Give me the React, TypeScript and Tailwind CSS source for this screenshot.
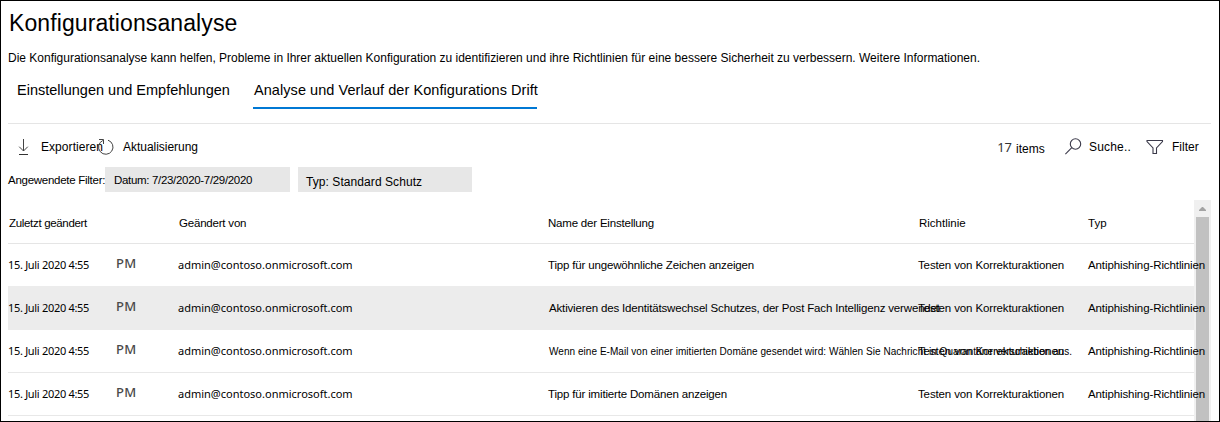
import type { ReactNode } from "react";

function DownloadIcon() {
  return (
    <svg width="12" height="18" viewBox="0 0 12 18" fill="none" strokeWidth="1">
      <path d="M5.500 1v12M1.200 8.700l4.300 4.300 4.300-4.300" stroke="#444" />
      <path d="M1 16.500h9" stroke="#333" />
    </svg>
  );
}

function RefreshIcon() {
  return (
    <svg width="18" height="18" viewBox="0 0 18 18" fill="none" stroke="#444" strokeWidth="1">
      <path d="M11 2.200a7.200 7.200 0 1 1-5.200.3" />
      <path d="M2 1.500h4.500v4.500" />
    </svg>
  );
}

function SearchIcon() {
  return (
    <svg width="18" height="18" viewBox="0 0 18 18" fill="none" stroke="#3b3a4a" strokeWidth="1.1">
      <circle cx="10.500" cy="6" r="5.200" />
      <path d="M6.800 9.700L0.400 16.100" />
    </svg>
  );
}

function FilterIcon() {
  return (
    <svg width="18" height="16" viewBox="0 0 18 16" fill="none" stroke="#3b3a4a" strokeWidth="1.1">
      <path d="M1 1.500h15.500v1l-6 6.500v5.500h-3.500v-5.500l-6-6.500z" />
    </svg>
  );
}

interface Row {
  setting: string;
  settingClass: string;
  rowClass: string;
}

const rows: Row[] = [
  {
    setting: "Tipp für ungewöhnliche Zeichen anzeigen",
    settingClass: "tracking-[-0.166px]",
    rowClass: "h-[43px]",
  },
  {
    setting: "Aktivieren des Identitätswechsel Schutzes, der Post Fach Intelligenz verwendet",
    settingClass: "pl-px tracking-[-0.16px]",
    rowClass: "-mt-px h-[44px] bg-[#ececec] pt-px",
  },
  {
    setting: "Wenn eine E-Mail von einer imitierten Domäne gesendet wird: Wählen Sie Nachricht in Quarantäne verschieben aus.",
    settingClass: "pl-px text-[10px] tracking-[0.047px]",
    rowClass: "h-[43px] border-b border-[#e8e8e8]",
  },
  {
    setting: "Tipp für imitierte Domänen anzeigen",
    settingClass: "tracking-[-0.17px]",
    rowClass: "h-[43px] border-b border-[#e8e8e8]",
  },
];

const columns = "grid grid-cols-[108px_62px_370px_370px_170px_106px] whitespace-nowrap";

function Chip({ className, children }: { className: string; children: ReactNode }) {
  return <div className={`h-[25px] bg-[#e7e7e7] ${className}`}>{children}</div>;
}

export default function App() {
  return (
    <div className="flex h-[422px] w-[1220px] flex-col overflow-hidden border border-black bg-white pl-[7px] pr-2 font-['Liberation_Sans',Arial,sans-serif] text-black">
      <h1 className="mt-2 h-7 pl-px text-[23px] leading-7 tracking-[0.1px]">Konfigurationsanalyse</h1>
      <p className="mt-3 h-[18px] whitespace-nowrap text-[12px] leading-[18px] tracking-[-0.009px]">
        Die Konfigurationsanalyse kann helfen, Probleme in Ihrer aktuellen Konfiguration zu identifizieren und ihre Richtlinien für eine bessere Sicherheit zu verbessern. Weitere Informationen.
      </p>

      <nav className="mt-1.5 flex h-[51px] border-b border-[#e5e5e5] pl-2 text-[14.5px] leading-[34px]">
        <div className="h-9 w-[237px] pl-px">Einstellungen und Empfehlungen</div>
        <div className="h-9 w-[284px] whitespace-nowrap border-b-2 border-[#0078d4] pl-px tracking-[0.06px]">
          Analyse und Verlauf der Konfigurations Drift
        </div>
      </nav>

      <div className="flex h-[43px] items-center pt-0.5 text-[12px] leading-4">
        <div className="ml-[10px] w-[23px]"><DownloadIcon /></div>
        <span className="w-[56px] whitespace-nowrap tracking-[0.06px]">Exportieren</span>
        <div className="w-[26px]"><RefreshIcon /></div>
        <span className="tracking-[-0.03px]">Aktualisierung</span>
        <div className="ml-auto flex items-center">
          <span className="mr-1 font-['Noto_Sans',sans-serif] text-[13px] leading-4 text-[#333]">17</span>
          <span className="w-[49px] pt-1">items</span>
          <SearchIcon />
          <span className="ml-[6px] w-[57px] tracking-[0.19px]">Suche..</span>
          <FilterIcon />
          <span className="ml-2 w-[39px]">Filter</span>
        </div>
      </div>

      <div className="flex h-[25px] text-[11.5px] leading-[26px]">
        <span className="w-[97px] whitespace-nowrap tracking-[-0.27px]">Angewendete Filter:</span>
        <Chip className="w-[185px] pl-[9px] tracking-[-0.32px]">Datum: 7/23/2020-7/29/2020</Chip>
        <Chip className="ml-2 w-[174px] pl-[8px] pt-px text-[12px] leading-[28px] tracking-[0.07px]">Typ: Standard Schutz</Chip>
      </div>

      <div className="mt-2 flex h-[221px]">
        <div className="z-10 w-[1186px]">
          <div className={`${columns} h-[44px] border-b border-[#e5e5e5] text-[11.5px] leading-[46px] tracking-[-0.2px]`}>
            <span className="col-span-2 pl-px tracking-[-0.32px]">Zuletzt geändert</span>
            <span className="pl-px">Geändert von</span>
            <span>Name der Einstellung</span>
            <span className="pl-px tracking-normal">Richtlinie</span>
            <span className="tracking-normal">Typ</span>
          </div>
          {rows.map((row) => (
            <div key={row.setting} className={`${columns} ${row.rowClass} text-[11.5px] leading-[43px]`}>
              <span className="font-['Noto_Sans',sans-serif] text-[11px] leading-[41px] tracking-[-0.31px]">15. Juli 2020 4:55</span>
              <span className="font-['Noto_Sans',sans-serif] text-[13px] font-medium leading-[39px] tracking-[0.2px] text-[#4a4a4a]">PM</span>
              <span className="font-['Noto_Sans',sans-serif] text-[11px] leading-[41px]">admin@contoso.onmicrosoft.com</span>
              <span className={row.settingClass}>{row.setting}</span>
              <span className="tracking-[-0.13px]">Testen von Korrekturaktionen</span>
              <span className="tracking-[-0.1px]">Antiphishing-Richtlinien</span>
            </div>
          ))}
        </div>
        <div className="flex h-[221px] w-[17px] flex-col items-center bg-[#f0f0f0]">
          <svg className="h-[17px] w-[17px] shrink-0" viewBox="0 0 17 17">
            <path d="M5 11h7v-1l-3-3h-1l-3 3z" fill="#a3a3a3" />
          </svg>
          <div className="w-[13px] grow bg-[#c1c1c1]" />
        </div>
      </div>
    </div>
  );
}
